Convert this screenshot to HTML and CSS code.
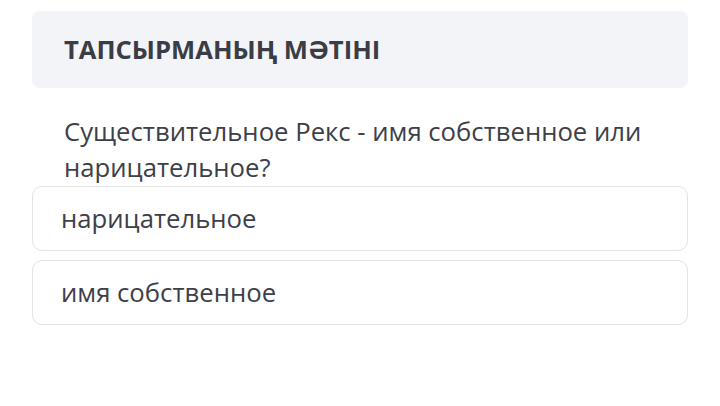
FILE: index.html
```html
<!DOCTYPE html>
<html lang="kk">
<head>
    <meta charset="UTF-8">
    <meta name="viewport" content="width=device-width, initial-scale=1.0">
    <title>Тапсырма</title>
    <link rel="stylesheet" href="styles.css">
</head>
<body>
    <div class="task">
        <div class="task-head">
            <h2>ТАПСЫРМАНЫҢ МӘТІНІ</h2>
        </div>
        <p class="question">Существительное Рекс - имя собственное или нарицательное?</p>
        <div class="answers">
            <div class="answer">нарицательное</div>
            <div class="answer">имя собственное</div>
        </div>
    </div>
</body>
</html>
```

FILE: styles.css
```css
body{
    margin: 0;
    background-color: white;
    font-family: "Open Sans", "Noto Sans", sans-serif;
    color: #3d4048;
}

.task{
    padding: 11px 32px 0 32px;
}

.task-head{
    background-color: #f3f4f7;
    border-radius: 8px;
    height: 77px;
    display: flex;
    align-items: center;
    padding: 0 32px;
}

.task-head h2{
    margin: 0;
    font-size: 25.6px;
    font-weight: 700;
    color: #3a3d45;
}

.question{
    margin: 26px 0 0 0;
    padding: 0 32px;
    font-size: 25.7px;
    line-height: 36px;
}

.answers{
    display: flex;
    flex-direction: column;
    gap: 9px;
}

.answer{
    border: 1px solid #e3e3e3;
    border-radius: 10px;
    height: 63px;
    display: flex;
    align-items: center;
    padding: 0 28px;
    font-size: 25.7px;
}
```
